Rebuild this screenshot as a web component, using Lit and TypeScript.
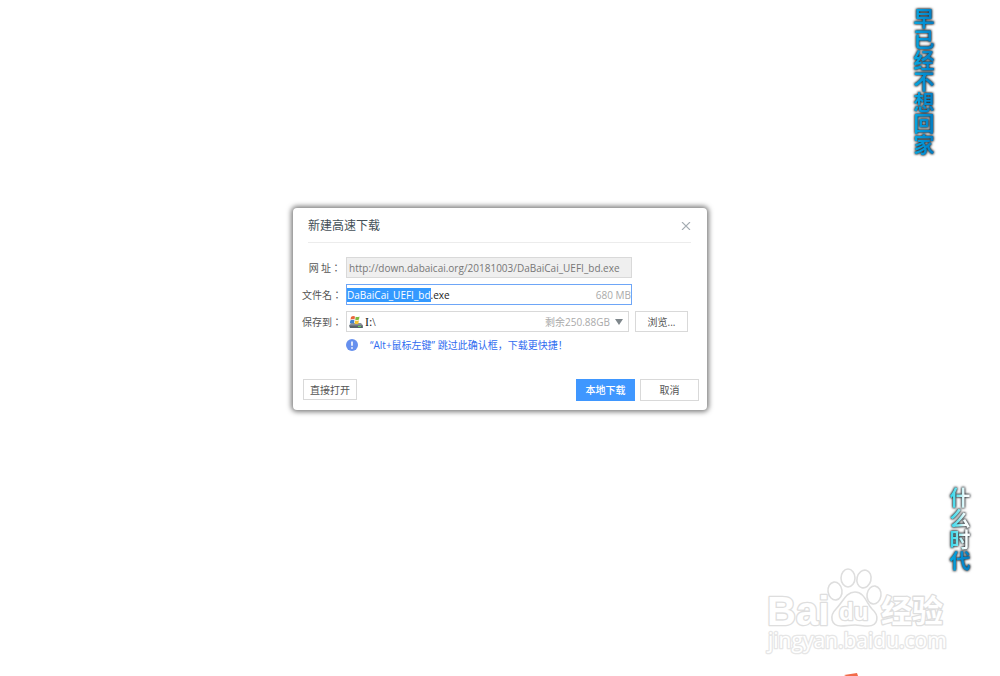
import { LitElement, html, css } from "lit";
import { customElement, property, query, state } from "lit/decorators.js";

@customElement("desktop-lyric")
class DesktopLyric extends LitElement {
  @property() text = "";
  @property({ type: Number }) sung = 0;

  static styles = css`
    :host { display: block; }
    .line {
      margin: 0;
      font: 700 21px/24px "Noto Sans CJK SC", sans-serif;
      writing-mode: vertical-rl;
      white-space: nowrap;
      filter: drop-shadow(0 0 1px #1d2830) drop-shadow(0 0 1px #5a5a5a);
    }
    .part { color: transparent; background-clip: text; -webkit-background-clip: text; }
    .pending { background-image: linear-gradient(to right, #18d0ec 10%, #7de6ee 45%, #f4fcfd 65%, #fff); }
    .done { background-image: linear-gradient(to right, #08b4e4, #0490d4 50%, #0470b4); }
  `;

  render() {
    const split = this.text.length - this.sung;
    return html`<p class="line"><span class="part pending">${this.text.slice(0, split)}</span><span class="part done">${this.text.slice(split)}</span></p>`;
  }
}

@customElement("site-watermark")
class SiteWatermark extends LitElement {
  static styles = css`
    :host { display: block; }
    .mark { display: block; overflow: visible; }
    .outline { fill: #fff; stroke: #dedede; stroke-width: 1.6px; stroke-linejoin: round; }
    .word { paint-order: stroke; stroke-width: 2.6px; }
    .latin { font: 700 40px "Liberation Sans", sans-serif; }
    .du { font: 700 24px "Liberation Sans", sans-serif; }
    .han { font: 700 31px "Noto Sans CJK SC", sans-serif; }
    .site { font: 400 21px "Open Sans", sans-serif; stroke: #e6e6e6; }
  `;

  render() {
    return html`
      <svg class="mark" width="182" height="90" viewBox="0 0 182 90">
        <text class="outline word latin" x="0" y="57">Bai</text>
        <ellipse class="outline" cx="68" cy="23" rx="7" ry="9" transform="rotate(-8 68 23)" />
        <ellipse class="outline" cx="81" cy="10" rx="7" ry="9" />
        <ellipse class="outline" cx="97" cy="11" rx="7" ry="9" transform="rotate(14 97 11)" />
        <ellipse class="outline" cx="107" cy="27" rx="7" ry="9" transform="rotate(8 107 27)" />
        <path class="outline" d="M88 24C97 24 99 34 105 41C113 48 111 58 101 58C96 58 92 57 88 57C83 57 79 58 74 58C64 58 62 48 69 41C76 34 79 24 88 24Z" />
        <text class="outline word du" x="72" y="52">du</text>
        <text class="outline word han" x="114" y="54">经验</text>
        <text class="outline word site" x="1" y="80">jingyan.baidu.com</text>
      </svg>
    `;
  }
}

@customElement("app-root")
class AppRoot extends LitElement {
  @query("#file-name") fileInput!: HTMLInputElement;
  @state() fileName = "DaBaiCai_UEFI_bd.exe";

  static styles = css`
    :host {
      display: block;
      font-family: "Open Sans", "Noto Sans CJK SC", sans-serif;
      font-size: 10px;
      line-height: 14px;
      color: #555;
      background: #fff;
    }
    .desktop {
      position: relative;
      box-sizing: border-box;
      min-height: 100vh;
      padding: 0 16px 58px;
      display: grid;
      place-items: center;
      overflow: hidden;
    }
    .dialog {
      box-sizing: border-box;
      width: 100%;
      max-width: 414px;
      padding: 10px 8px 9px 9px;
      background: #fff;
      border-radius: 4px;
      box-shadow: 0 0 5px 2px rgba(0, 0, 0, 0.5);
    }
    .head {
      display: flex;
      align-items: center;
      justify-content: space-between;
      margin: 0 8px 14px 6px;
      padding-bottom: 8px;
      border-bottom: 1px solid #ececec;
    }
    .title { margin: 0; font-size: 12px; line-height: 16px; font-weight: 400; color: #444f57; }
    button {
      box-sizing: border-box;
      margin: 0;
      padding: 0;
      border: 1px solid #d9d9d9;
      background: #fff;
      color: #555;
      font: inherit;
      cursor: pointer;
    }
    .close { display: flex; border: 0; padding: 4px 0; }
    .rows {
      display: grid;
      grid-template-columns: 39px minmax(0, 286px) minmax(0, 1fr);
      column-gap: 5px;
      row-gap: 6px;
      align-items: center;
    }
    label {
      grid-column: 1;
      text-align: right;
      white-space: pre;
      font-family: "Noto Sans CJK TC", sans-serif;
    }
    .box {
      box-sizing: border-box;
      height: 21px;
      display: flex;
      align-items: center;
      border: 1px solid #d9d9d9;
      background: #fff;
    }
    .locked { background: #efefef; }
    .active { border-color: #6ea6f7; }
    .wide { grid-column: 2; }
    input, select {
      flex: 1;
      min-width: 0;
      margin: 0;
      padding: 0;
      border: 0;
      outline: 0;
      background: transparent;
      font: inherit;
      color: #222;
      appearance: none;
    }
    .locked input { padding-left: 2px; color: #777; }
    input::selection { background: #3399ff; color: #fff; }
    .hint { color: #aaa; white-space: nowrap; }
    .save { grid-column: 2 / 4; display: flex; gap: 6px; }
    .drive { flex: 0 1 283px; padding: 0 5px 0 2px; gap: 2px; }
    .drive select { font-family: "Liberation Serif", serif; font-size: 12px; }
    .drive .hint { margin-right: 3px; }
    .browse { width: 53px; }
    .tip {
      grid-column: 2 / 4;
      display: flex;
      align-items: center;
      gap: 12px;
      margin: 0;
      color: #2f6bf0;
      white-space: nowrap;
    }
    .foot { display: flex; justify-content: space-between; margin: 27px 0 0 1px; align-items: flex-start; }
    .open { width: 54px; height: 21px; }
    .pair { display: flex; gap: 5px; }
    .pair button { width: 59px; height: 22px; }
    .pair .go { background: #3f97ff; border-color: #3f97ff; color: #fff; font-weight: 500; }
    .lyric-a { position: absolute; top: 8px; right: 64px; }
    .lyric-b { position: absolute; bottom: 105px; right: 28px; }
    .watermark { position: absolute; right: 51px; bottom: 18px; }
    .scrap { position: absolute; right: 142px; bottom: 0; }
  `;

  firstUpdated() {
    this.fileInput.focus();
    this.fileInput.setSelectionRange(0, this.fileName.lastIndexOf("."));
  }

  render() {
    return html`
      <main class="desktop">
        <section class="dialog" role="dialog" aria-labelledby="title">
          <header class="head">
            <h1 class="title" id="title">新建高速下载</h1>
            <button class="close" aria-label="关闭">
              <svg width="10" height="8" viewBox="0 0 10 8"><path d="M1 0L9 8M9 0L1 8" stroke="#a4acb2" stroke-width="1.100" fill="none" /></svg>
            </button>
          </header>
          <div class="rows">
            <label for="url">网 址：</label>
            <div class="box locked wide">
              <input id="url" readonly .value=${"http://down.dabaicai.org/20181003/DaBaiCai_UEFI_bd.exe"} />
            </div>
            <label for="file-name">文件名：</label>
            <div class="box active wide">
              <input id="file-name" spellcheck="false" .value=${this.fileName} />
              <span class="hint">680 MB</span>
            </div>
            <label for="drive">保存到：</label>
            <div class="save">
              <div class="box drive">
                <svg width="14" height="14" viewBox="0 0 14 14">
                  <path d="M2 8L12 8L14 10.500L14 13L1 13L0 10.500Z" fill="#8b9299" />
                  <path d="M0.500 10.500H13.500V13H1Z" fill="#59636b" />
                  <rect x="9" y="11" width="3" height="1" fill="#62d45c" />
                  <path d="M2 2Q4 0.500 6 1.500L5.500 4.500Q3.500 3.500 1.500 4.800Z" fill="#e9663c" />
                  <path d="M6.700 1.700Q8.500 2.500 10.500 1.500L10 4.500Q8 5.500 6.200 4.700Z" fill="#7fba42" />
                  <path d="M1.300 5.500Q3.300 4.300 5.400 5.300L5 8.500Q3 7.500 0.800 8.500Z" fill="#3f83d2" />
                  <path d="M6.100 5.500Q8 6.300 9.900 5.300L9.400 8.500Q7.500 9.500 5.600 8.700Z" fill="#f5c431" />
                </svg>
                <select id="drive"><option>I:\\</option></select>
                <span class="hint">剩余250.88GB</span>
                <svg width="8" height="6" viewBox="0 0 8 6"><path d="M0 0H8L4 6Z" fill="#7f878c" /></svg>
              </div>
              <button class="browse">浏览...</button>
            </div>
            <p class="tip">
              <svg width="12" height="12" viewBox="0 0 12 12">
                <circle cx="6" cy="6" r="6" fill="#6690ee" />
                <path d="M6 2.500V6.800M6 8.200V9.700" stroke="#fff" stroke-width="1.600" />
              </svg>
              <span>“Alt+鼠标左键” 跳过此确认框，下载更快捷！</span>
            </p>
          </div>
          <footer class="foot">
            <button class="open">直接打开</button>
            <div class="pair">
              <button class="go">本地下载</button>
              <button>取消</button>
            </div>
          </footer>
        </section>
        <desktop-lyric class="lyric-a" text="早已经不想回家" sung="7"></desktop-lyric>
        <desktop-lyric class="lyric-b" text="什么时代" sung="1"></desktop-lyric>
        <site-watermark class="watermark"></site-watermark>
        <svg class="scrap" width="14" height="3" viewBox="0 0 14 3"><path d="M0 2L13 0L14 3H2Z" fill="#f26b4a" /></svg>
      </main>
    `;
  }
}
